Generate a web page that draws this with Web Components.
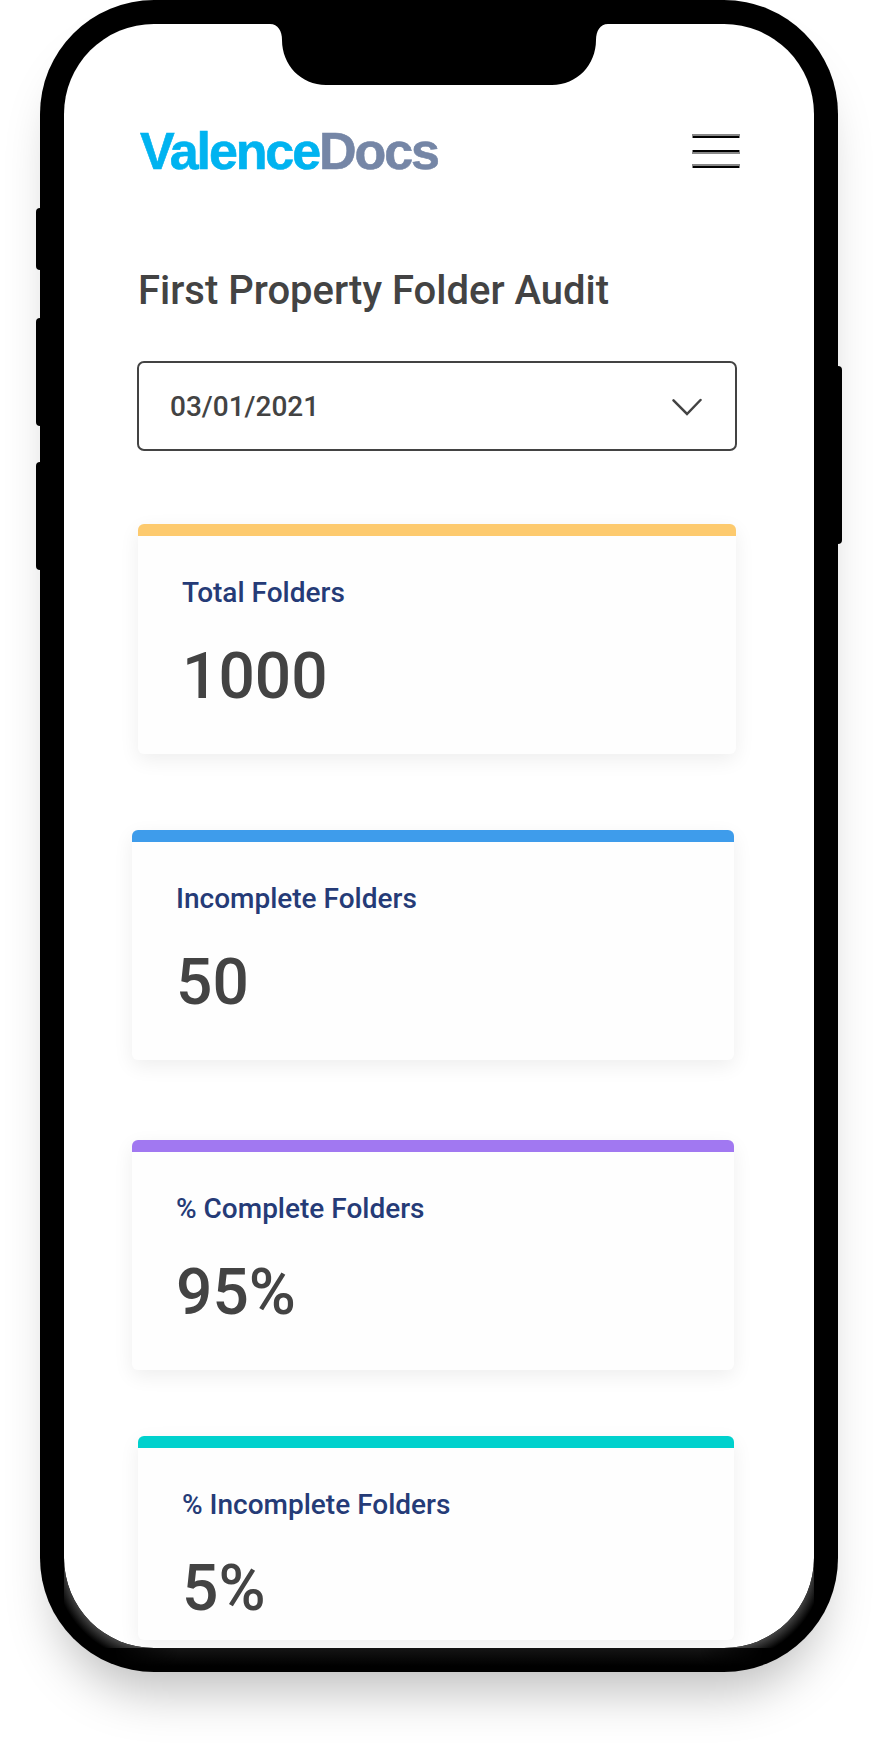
<!DOCTYPE html>
<html lang="en">
<head>
<meta charset="utf-8">
<title>ValenceDocs</title>
<style>
  html, body { margin: 0; background: #fff; }
  body { width: 878px; height: 1753px; overflow: hidden; font-family: Roboto, "Liberation Sans", sans-serif; font-weight: 500; color: #434343; }
</style>
</head>
<body>
<phone-frame>
  <app-header></app-header>
  <page-title>First Property Folder Audit</page-title>
  <date-select>03/01/2021</date-select>
  <stat-card style="--accent:#fdca6e;margin:73px 0 0 74px;width:598px"><span slot="label">Total Folders</span>1000</stat-card>
  <stat-card style="--accent:#3e9ceb;margin:76px 0 0 68px;width:602px"><span slot="label">Incomplete Folders</span>50</stat-card>
  <stat-card style="--accent:#a178f1;margin:80px 0 0 68px;width:602px"><span slot="label">% Complete Folders</span>95%</stat-card>
  <stat-card style="--accent:#00d1cd;--card-height:204px;margin:66px 0 0 74px;width:596px"><span slot="label">% Incomplete Folders</span>5%</stat-card>
</phone-frame>
<script>
const define = (name, html) => customElements.define(name, class extends HTMLElement {
  constructor() {
    super();
    const t = document.createElement('template');
    t.innerHTML = html;
    this.attachShadow({ mode: 'open' }).append(t.content.cloneNode(true));
  }
});

define('phone-frame', `
<style>
  :host { display: block; position: relative; box-sizing: border-box; width: 798px; height: 1672px; margin-left: 40px;
    padding: 24px; background: #000; border-radius: 114px; box-shadow: 0 36px 50px -17px rgba(0,0,0,.26); }
  .screen { height: 1624px; background: #fff; border-radius: 90px; overflow: hidden; display: flex; flex-direction: column; }
  .notch { position: absolute; left: 230px; top: 23px; }
  .gloss { position: absolute; left: 24px; bottom: 0; }
  .key { position: absolute; left: -4px; width: 8px; background: #000; border-radius: 4px; }
  .r { left: 794px; }
</style>
<i class="key" style="top:208px;height:62px"></i>
<i class="key" style="top:318px;height:108px"></i>
<i class="key" style="top:462px;height:108px"></i>
<i class="key r" style="top:366px;height:178px"></i>
<div class="screen"><slot></slot></div>
<svg class="notch" width="338" height="62"><path d="M0 0V1C8 1 12 8 12 17C12 42 31 62 56 62H282C307 62 326 42 326 17C326 8 330 1 338 1V0Z"/></svg>
<svg class="gloss" width="750" height="114">
  <defs>
    <radialGradient id="l" gradientUnits="userSpaceOnUse" cx="90" cy="3" r="100"><stop offset=".87" stop-color="#484848"/><stop offset=".92" stop-color="#2c2c2c"/><stop offset="1" stop-color="#000"/></radialGradient>
    <radialGradient id="r" gradientUnits="userSpaceOnUse" cx="660" cy="3" r="100"><stop offset=".87" stop-color="#484848"/><stop offset=".92" stop-color="#2c2c2c"/><stop offset="1" stop-color="#000"/></radialGradient>
    <linearGradient id="b" x2="0" y2="1"><stop stop-color="#151515"/><stop offset="1" stop-color="#000"/></linearGradient>
    <linearGradient id="f"><stop stop-color="#000"/><stop offset=".1" stop-color="#fff"/><stop offset=".9" stop-color="#fff"/><stop offset="1" stop-color="#000"/></linearGradient>
    <mask id="m"><rect x="50" y="90" width="650" height="20" fill="url(#f)"/></mask>
  </defs>
  <path fill="url(#l)" d="M0 20V0A90 90 0 0 0 90 90H24L0 60Z"/>
  <path fill="url(#r)" d="M750 0A90 90 0 0 1 660 90H726L750 60Z"/>
  <rect x="50" y="90" width="650" height="18" fill="url(#b)" mask="url(#m)"/>
</svg>`);

define('app-header', `
<style>
  :host { display: flex; justify-content: space-between; height: 56px; margin: 100px 74px 0 76px; }
  .logo { margin-top: -1px; font: 700 52px/56px "Liberation Sans", sans-serif; letter-spacing: -2.1px; color: #00b3f0; white-space: nowrap; -webkit-text-stroke: .6px currentColor; }
  .logo span { color: #7586a6; }
  svg { margin-top: 10px; flex: none; }
</style>
<div class="logo">Valence<span>Docs</span></div>
<svg width="48" height="34"><g fill="#888"><path d="M0 0h48v4H0zM0 16h48v4H0zM0 30h48v4H0z"/></g><path d="M1 2h46v2H1zM1 16h46v2H1zM1 32h46v2H1z"/></svg>`);

define('page-title', `
<style>:host { display: block; margin: 87px 0 0 74px; font-size: 40px; line-height: 48px; white-space: nowrap; }</style><slot></slot>`);

define('date-select', `
<style>
  :host { display: flex; align-items: center; justify-content: space-between; box-sizing: border-box; width: 600px; height: 90px;
    margin: 46px 0 0 73px; padding: 2px 33px 0 31px; border: 2px solid #434343; border-radius: 7px; font-size: 28px; line-height: 34px; }
</style>
<span><slot></slot></span>
<svg width="30" height="18" fill="none" stroke="#434343" stroke-width="2.5" stroke-linecap="round"><path d="M1.5 2.3 15 16 28.5 2"/></svg>`);

define('stat-card', `
<style>
  :host { display: block; flex: none; box-sizing: border-box; height: var(--card-height, 230px); border-radius: 6px; overflow: hidden;
    border-top: 12px solid var(--accent); padding: 40px 0 0 44px; background: #fefefe; box-shadow: 0 6px 20px rgba(0,0,0,.07); }
  .label { font-size: 28px; line-height: 34px; color: #253b77; }
  .value { font-size: 64px; line-height: 76px; margin-top: 29px; }
</style>
<div class="label"><slot name="label"></slot></div>
<div class="value"><slot></slot></div>`);
</script>
</body>
</html>
